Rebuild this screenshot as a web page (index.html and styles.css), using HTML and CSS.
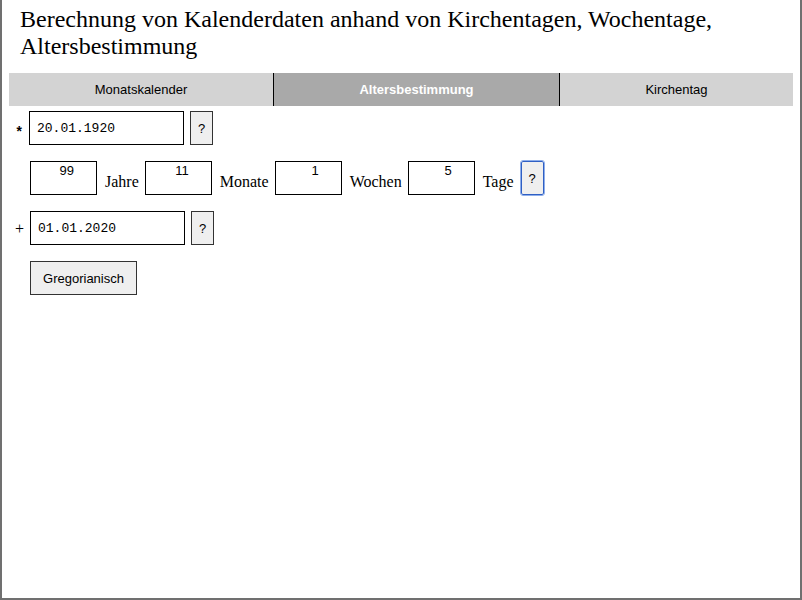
FILE: index.html
```html
<!DOCTYPE html>
<html lang="de">
<head>
<meta charset="utf-8">
<title>Altersbestimmung</title>
<link rel="stylesheet" href="styles.css">
</head>
<body>
<div class="frame">
  <h1 class="title">Berechnung von Kalenderdaten anhand von Kirchentagen, Wochentage, Altersbestimmung</h1>
  <nav class="tabs">
    <div class="tab">Monatskalender</div>
    <div class="tab active">Altersbestimmung</div>
    <div class="tab">Kirchentag</div>
  </nav>
  <main class="form">
    <div class="row">
      <span class="mark star">*</span>
      <input class="date" type="text" value="20.01.1920">
      <button class="help" type="button">?</button>
    </div>
    <div class="row indent">
      <input class="num" type="text" value="99">
      <span class="label">Jahre</span>
      <input class="num" type="text" value="11">
      <span class="label">Monate</span>
      <input class="num" type="text" value="1">
      <span class="label">Wochen</span>
      <input class="num" type="text" value="5">
      <span class="label">Tage</span>
      <button class="help focus" type="button">?</button>
    </div>
    <div class="row">
      <span class="mark plus">+</span>
      <input class="date" type="text" value="01.01.2020">
      <button class="help" type="button">?</button>
    </div>
    <div class="row indent">
      <button class="action" type="button">Gregorianisch</button>
    </div>
  </main>
</div>
</body>
</html>
```
FILE: styles.css
```css
html, body {
  margin: 0;
  padding: 0;
  background: #fff;
}

.frame {
  box-sizing: border-box;
  min-height: 600px;
  border: 2px solid #707070;
  border-top: 0;
  padding: 0 7px;
  font-family: "Liberation Serif", "Times New Roman", serif;
  color: #000;
}

.title {
  margin: 0;
  padding: 6px 11px 0;
  font-family: "Liberation Serif", "Times New Roman", serif;
  font-weight: normal;
  font-size: 24px;
  line-height: 27px;
  height: 73px;
  box-sizing: border-box;
}

.tabs {
  display: grid;
  grid-template-columns: 264fr 286fr 234fr;
  height: 33px;
  font-family: "Liberation Sans", Arial, sans-serif;
  font-size: 13px;
}

.tab {
  display: flex;
  align-items: center;
  justify-content: center;
  background: #d3d3d3;
  color: #000;
}

.tab + .tab {
  border-left: 1px solid #000;
}

.tab.active {
  background: #a9a9a9;
  color: #fff;
  font-weight: bold;
}

.form {
  display: flex;
  flex-direction: column;
  gap: 16px;
  padding-top: 5px;
}

.row {
  display: flex;
  align-items: center;
  height: 34px;
  padding-left: 6px;
}

.row.indent {
  padding-left: 21px;
}

.mark {
  color: #000;
}

.mark.star {
  width: 14px;
  font-family: "Liberation Mono", "Courier New", monospace;
  font-size: 14px;
  font-weight: bold;
  padding-top: 9px;
}

.mark.plus {
  width: 15px;
  font-family: "Liberation Serif", "Times New Roman", serif;
  font-size: 16px;
  padding-top: 2px;
}

input {
  box-sizing: border-box;
  height: 34px;
  border: 1px solid #000;
  border-radius: 0;
  margin: 0;
  background: #fff;
  color: #000;
  outline: none;
}

.date {
  width: 155px;
  padding: 0 7px;
  font-family: "Liberation Mono", "Courier New", monospace;
  font-size: 13px;
}

.num {
  width: 67px;
  padding: 0 22px 16px 0;
  text-align: right;
  font-family: "Liberation Sans", Arial, sans-serif;
  font-size: 13px;
}

.label {
  font-size: 16px;
  margin: 0 6px 0 8px;
  padding-top: 8px;
}

button {
  font-family: "Liberation Sans", Arial, sans-serif;
  font-size: 13px;
  color: #000;
  background: #efefef;
  border: 1px solid #333;
  border-radius: 0;
  margin: 0;
  box-sizing: border-box;
  height: 34px;
}

.help {
  width: 23px;
  padding: 0;
  margin-left: 6px;
}

.help.focus {
  margin-left: 1px;
  border-color: #2f5fc4;
  border-radius: 2px;
  outline: 1px solid #8eaeea;
}

.action {
  width: 107px;
  padding: 0 10px;
}
```
